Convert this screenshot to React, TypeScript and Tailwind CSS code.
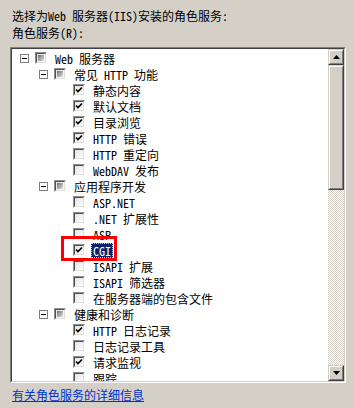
import React from "react";

type State = "checked" | "unchecked" | "partial";
type Row = { label: string; level: 0 | 1 | 2; state: State; exp?: boolean; sel?: boolean };

const rows: Row[] = [
  { label: "Web 服务器", level: 0, state: "partial", exp: true },
  { label: "常见 HTTP 功能", level: 1, state: "partial", exp: true },
  { label: "静态内容", level: 2, state: "checked" },
  { label: "默认文档", level: 2, state: "checked" },
  { label: "目录浏览", level: 2, state: "checked" },
  { label: "HTTP 错误", level: 2, state: "checked" },
  { label: "HTTP 重定向", level: 2, state: "unchecked" },
  { label: "WebDAV 发布", level: 2, state: "unchecked" },
  { label: "应用程序开发", level: 1, state: "partial", exp: true },
  { label: "ASP.NET", level: 2, state: "unchecked" },
  { label: ".NET 扩展性", level: 2, state: "unchecked" },
  { label: "ASP", level: 2, state: "unchecked" },
  { label: "CGI", level: 2, state: "checked", sel: true },
  { label: "ISAPI 扩展", level: 2, state: "unchecked" },
  { label: "ISAPI 筛选器", level: 2, state: "unchecked" },
  { label: "在服务器端的包含文件", level: 2, state: "unchecked" },
  { label: "健康和诊断", level: 1, state: "partial", exp: true },
  { label: "HTTP 日志记录", level: 2, state: "checked" },
  { label: "日志记录工具", level: 2, state: "unchecked" },
  { label: "请求监视", level: 2, state: "checked" },
  { label: "跟踪", level: 2, state: "unchecked" },
];

const padClass = ["pl-[8px]", "pl-[27px]", "pl-[46px]"];

function Expander() {
  return (
    <div className="w-[9px] h-[9px] border border-[#808080] bg-white flex items-center justify-center">
      <div className="w-[5px] h-[1px] bg-black" />
    </div>
  );
}

function CheckBox({ state }: { state: State }) {
  return (
    <div className="w-[12px] h-[12px] border border-t-[#909090] border-l-[#909090] border-b-white border-r-white">
      <div className="w-full h-full border border-t-[#505050] border-l-[#505050] border-b-[#e0dcd8] border-r-[#e0dcd8] bg-[linear-gradient(135deg,#e4e0e4,#ffffff)] flex items-center justify-center">
        {state === "checked" && (
          <svg width="8" height="8" viewBox="0 0 8 8">
            <path d="M1 3.5 L3 5.5 L7 1.5" stroke="#000" strokeWidth="1.6" fill="none" />
          </svg>
        )}
        {state === "partial" && (
          <div className="w-[6px] h-[6px] bg-[linear-gradient(135deg,#707070,#e0e0e0)]" />
        )}
      </div>
    </div>
  );
}

function Raised({ children, className }: { children?: React.ReactNode; className?: string }) {
  return (
    <div className={"border border-t-[#d4d0c8] border-l-[#d4d0c8] border-b-[#404040] border-r-[#404040] bg-[#d4d0c8] " + (className || "")}>
      <div className="w-full h-full border border-t-white border-l-white border-b-[#808080] border-r-[#808080] flex items-center justify-center">
        {children}
      </div>
    </div>
  );
}

export default function App() {
  const font = {
    fontFamily: '"Noto Sans Mono CJK SC", "Noto Sans CJK SC", "Liberation Mono", monospace',
  };
  return (
    <div className="relative w-[354px] h-[408px] bg-[#d4d0c8] overflow-hidden text-[12px] text-black" style={font}>
      <div className="pl-[12px] pt-[7px] leading-[17px]">
        <div>选择为Web 服务器(IIS)安装的角色服务:</div>
        <div>角色服务(R):</div>
      </div>
      <div className="ml-[10px] mt-[6px] w-[336px] h-[336px] border border-t-[#808080] border-l-[#808080] border-b-white border-r-white">
        <div className="w-full h-full border border-t-[#404040] border-l-[#404040] border-b-[#d4d0c8] border-r-[#d4d0c8] flex">
          <div className="flex-1 bg-white overflow-hidden pt-[1px]">
            {rows.map((r, i) => (
              <div key={i} className={"h-[16px] flex items-center " + padClass[r.level]}>
                <div className="w-[9px] h-[9px] mr-[6px]">{r.exp && <Expander />}</div>
                <CheckBox state={r.state} />
                <div
                  className={
                    "ml-[6px] h-[15px] px-[1px] flex items-center whitespace-nowrap leading-[13px] border " +
                    (r.sel ? "bg-[#0a246a] text-white border-dotted border-[#d8d890]" : "border-transparent")
                  }
                >
                  {r.label}
                </div>
              </div>
            ))}
          </div>
          <div className="w-[16px] flex flex-col">
            <Raised className="h-[16px]">
              <svg width="7" height="4" viewBox="0 0 7 4">
                <path d="M3.5 0 L7 4 L0 4 Z" fill="#000" />
              </svg>
            </Raised>
            <Raised className="h-[125px]" />
            <div className="flex-1 bg-[conic-gradient(#ffffff_25%,#d4d0c8_0_50%,#ffffff_0_75%,#d4d0c8_0)] bg-[length:2px_2px]" />
            <Raised className="h-[16px]">
              <svg width="7" height="4" viewBox="0 0 7 4">
                <path d="M0 0 L7 0 L3.5 4 Z" fill="#000" />
              </svg>
            </Raised>
          </div>
        </div>
      </div>
      <div className="pl-[12px] mt-[3px] leading-[17px]">
        <a href="#" className="text-[#0033cc] underline">有关角色服务的详细信息</a>
      </div>
      <div className="absolute left-[61px] top-[236px] w-[56px] h-[25px] border-[3px] border-[#ff0000]" />
    </div>
  );
}
